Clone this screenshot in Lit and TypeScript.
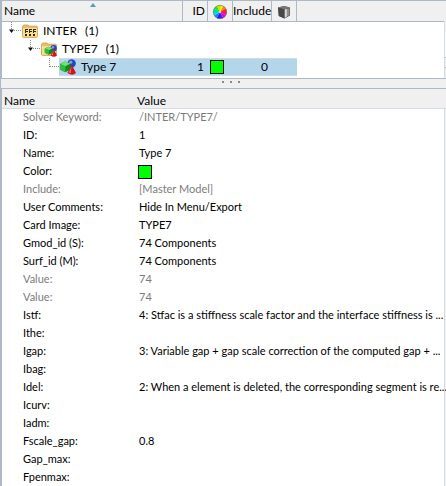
import { LitElement, html, svg, css, nothing } from "lit";
import { customElement } from "lit/decorators.js";
import { classMap } from "lit/directives/class-map.js";

interface TreeNode {
  label: string;
  count?: number;
  level: number;
  icon: "groups" | "folder" | "entity";
  id?: string;
  include?: string;
}

interface Attribute {
  name: string;
  value: string;
  muted?: boolean;
  swatch?: boolean;
}

const NODES: TreeNode[] = [
  { label: "INTER", count: 1, level: 0, icon: "groups" },
  { label: "TYPE7", count: 1, level: 1, icon: "folder" },
  { label: "Type 7", level: 2, icon: "entity", id: "1", include: "0" },
];

const ATTRIBUTES: Attribute[] = [
  { name: "Solver Keyword", value: "/INTER/TYPE7/", muted: true },
  { name: "ID", value: "1" },
  { name: "Name", value: "Type 7" },
  { name: "Color", value: "", swatch: true },
  { name: "Include", value: "[Master Model]", muted: true },
  { name: "User Comments", value: "Hide In Menu/Export" },
  { name: "Card Image", value: "TYPE7" },
  { name: "Gmod_id (S)", value: "74 Components" },
  { name: "Surf_id (M)", value: "74 Components" },
  { name: "Value", value: "74", muted: true },
  { name: "Value", value: "74", muted: true },
  { name: "Istf", value: "4: Stfac is a stiffness scale factor and the interface stiffness is ..." },
  { name: "Ithe", value: "" },
  { name: "Igap", value: "3: Variable gap + gap scale correction of the computed gap + ..." },
  { name: "Ibag", value: "" },
  { name: "Idel", value: "2: When a element is deleted, the corresponding segment is re..." },
  { name: "Icurv", value: "" },
  { name: "Iadm", value: "" },
  { name: "Fscale_gap", value: "0.8" },
  { name: "Gap_max", value: "" },
  { name: "Fpenmax", value: "" },
];

const WHEEL = [
  "#ffe500", "#ff8a00", "#ff2020", "#f0108a", "#d800e8", "#6a10f0",
  "#1020f0", "#1080ff", "#00d8f0", "#00e080", "#20e020", "#a8f000",
];

const folder = svg`
  <path d="M.5 3.5 L1.5 2 H6 L7 3.2 H14.5 Q15.4 3.2 15.4 4.2 V13.4 Q15.4 14.4 14.4 14.4 H1.6 Q.5 14.4 .5 13.4 Z" fill="#e9bd62" stroke="#cf9c45" stroke-width=".8"/>
  <path d="M1 5 H15 V13.8 H1 Z" fill="#f9dc95"/>`;

const shapes = svg`
  <circle cx="11.6" cy="4.4" r="4.2" fill="#2447b8"/>
  <circle cx="10.8" cy="3.2" r="1.6" fill="#7f9cf0"/>
  <path d="M11.6 5.6 L16 14 Q12.4 17.4 7.4 14 Z" fill="#cf1420"/>
  <path d="M11.5 7.5 L10.6 14.2 L9 13.4 Z" fill="#ff7b78"/>
  <path d="M0 5 L5 2.6 L10.4 4.6 V10.4 L5.4 13.2 L0 10.4 Z" fill="#158522"/>
  <path d="M0 5 L5 2.6 L10.4 4.6 L5.4 7.2 Z" fill="#6fe07a"/>
  <path d="M0 5 L5.4 7.2 V13.2 L0 10.4 Z" fill="#2cc03a"/>`;

function nodeIcon(kind: TreeNode["icon"]) {
  const body =
    kind === "groups"
      ? svg`${folder}<path d="M3 6h3v1H4v1h2v1H4v1H3zM7 6h3v1H8v1h2v1H8v1H7zM11 6h3v1h-2v1h2v1h-2v1h-1zM3 11h2v2h-2zM7 11h2v2H7zM11 11h2v2h-2z" fill="#33290f"/>`
      : kind === "folder"
        ? svg`${folder}<g transform="translate(3.8 3.8) scale(.76)">${shapes}</g>`
        : shapes;
  return html`<svg class="icon" viewBox="0 0 16 16" aria-hidden="true">${body}</svg>`;
}

function branch(leaf: boolean) {
  return html`<svg class="branch" viewBox="0 0 19 18" aria-hidden="true">
    <path d="${leaf ? "M9.5 0V9" : "M9.5 0V8"}M10 8.5H19" fill="none" stroke="#8a8a8a" stroke-dasharray="1 1"/>
    ${leaf ? nothing : svg`<path d="M7 7.5H12L9.5 11Z" fill="#111"/>`}
  </svg>`;
}

@customElement("app-root")
export class AppRoot extends LitElement {
  static styles = css`
    :host {
      display: flex;
      flex-direction: column;
      min-height: 100vh;
      box-sizing: border-box;
      overflow: hidden;
      background: #fff;
      color: #000;
      font: 12px/18px Lato, "Liberation Sans", sans-serif;
    }
    .browser {
      display: flex;
      border-top: 1px solid #adb9c5;
      border-left: 2px solid #adb9c5;
      border-bottom: 1px solid #adb9c5;
      background: linear-gradient(#f0f0f0 20px, #adb9c5 20px 21px, #fff 21px);
    }
    table {
      flex: 1;
      min-width: 0;
      width: 100%;
      table-layout: fixed;
      border-collapse: separate;
      border-spacing: 0;
    }
    th, td {
      padding: 0;
      font-weight: 400;
      text-align: left;
      white-space: nowrap;
      height: 18px;
    }
    .tree { margin-bottom: 2px; }
    .tree th {
      height: 20px;
      line-height: 20px;
      background: #f0f0f0;
      border-bottom: 1px solid #adb9c5;
      border-right: 1px solid #adb9c5;
    }
    .tree th:last-child { border-right: 0; }
    .head {
      display: grid;
      grid-template-columns: 1fr auto 1fr;
      height: 20px;
      padding-left: 2px;
    }
    .sort { width: 6px; height: 4px; margin-top: 2px; }
    .name { width: 181px; }
    .slot { width: 25px; }
    .include { width: 39px; }
    .tree th.number { text-align: right; padding-right: 2px; }
    .tree td.number { text-align: right; padding-right: 4px; }
    .tree th.middle { text-align: center; }
    .glyph { display: block; width: 16px; height: 16px; margin: 2px auto 0; }
    .node { display: flex; height: 18px; }
    .level-1 { padding-left: 19px; }
    .level-2 { padding-left: 38px; }
    .branch { flex: none; width: 19px; height: 18px; }
    .icon { flex: none; width: 16px; height: 16px; margin-top: 1px; }
    .label {
      flex: 1;
      display: flex;
      gap: 5px;
      padding-left: 1px;
    }
    .count { padding-left: 3px; }
    .selected .label, .selected .mark {
      background: #b3d6ea;
      box-shadow: inset 0 1px #cbdde8, inset 0 -1px #cbdde8;
    }
    .swatch {
      display: block;
      box-sizing: border-box;
      width: 14px;
      height: 14px;
      border: 1px solid #000;
      background: #0f0;
    }
    .mark .swatch { margin-left: 2px; }
    .scroll {
      flex: none;
      width: 1px;
      margin-top: 20px;
      border-left: 1px solid #d5dce3;
      background: linear-gradient(#f0f0f0 11px, #fff 11px 36px, #adb9c5 36px 37px, #f0f0f0 37px 46px, #adb9c5 46px 47px, #f0f0f0 47px);
    }
    .splitter {
      display: flex;
      justify-content: center;
      gap: 6px;
      height: 9px;
      padding-top: 2px;
      padding-left: 14px;
      box-sizing: border-box;
      border-left: 1px solid #adb9c5;
      background: #f0f0f0;
    }
    .dot { width: 2px; height: 2px; background: #8a8a8a; }
    .attributes {
      flex: 1;
      border-top: 1px solid #adb9c5;
      border-left: 2px solid #adb9c5;
      background: linear-gradient(to left, #f0f0f0 1px, #d5dce3 1px 2px, #fff 2px);
    }
    .attributes thead th {
      height: 20px;
      padding-top: 4px;
      line-height: 15px;
      box-sizing: border-box;
      border-bottom: 1px solid #d5dce3;
      background: #f0f0f0;
    }
    .attributes thead th:first-child { padding-left: 2px; }
    .attributes tbody { font-size: 11px; line-height: 16px; }
    .attributes tbody th, .attributes tbody td { vertical-align: top; }
    .attributes tbody th { padding-left: 21px; }
    .attributes tbody td { padding-left: 2px; }
    .attributes td .swatch { margin: 2px 0 0 -1px; }
    .key { width: 135px; }
    .muted { color: #7b7b7b; }
  `;

  private colorWheel() {
    return html`<svg class="glyph" viewBox="0 0 16 16" role="img" aria-label="Color">
      ${WHEEL.map((color, i) => {
        const at = (n: number) => {
          const a = (n * Math.PI) / 6 - Math.PI / 2;
          return `${8 + 6.8 * Math.cos(a)} ${8 + 6.8 * Math.sin(a)}`;
        };
        return svg`<path d="M8 8L${at(i)}A6.8 6.8 0 0 1 ${at(i + 1)}Z" fill=${color} />`;
      })}
      <circle cx="8" cy="8" r="6.7" fill="none" stroke="#777" stroke-width=".7"/>
      <circle cx="8" cy="8" r="1.2" fill="#fff" opacity=".5"/>
    </svg>`;
  }

  private cube() {
    return html`<svg class="glyph" viewBox="0 0 16 16" role="img" aria-label="Style">
      <path d="M2 3.6L8 2L14 3.6V11.5L8.6 14.6L2.8 12Z" fill="#555"/>
      <path d="M2 3.6L8 2L14 3.6L8.4 5.4Z" fill="#777"/>
      <path d="M2 3.6L8.4 5.4V14.6L2.8 12Z" fill="#484848"/>
      <path d="M8.8 5.6L13.4 4.2V11.2L8.8 13.8Z" fill="#909090"/>
      <path d="M8.8 5.6L10.8 5V12.6L8.8 13.8Z" fill="#d8d8d8"/>
    </svg>`;
  }

  render() {
    return html`
      <div class="browser">
        <table class="tree">
          <colgroup>
            <col class="name" /><col class="slot" /><col class="slot" /><col class="include" /><col class="slot" /><col />
          </colgroup>
          <thead>
            <tr>
              <th>
                <div class="head">
                  <span>Name</span>
                  <svg class="sort" viewBox="0 0 6 4" aria-hidden="true"><path d="M0 4L3 0L6 4Z" fill="#5b9ab5"/></svg>
                </div>
              </th>
              <th class="number">ID</th>
              <th>${this.colorWheel()}</th>
              <th class="middle">Include</th>
              <th>${this.cube()}</th>
              <th></th>
            </tr>
          </thead>
          <tbody>
            ${NODES.map((n) => {
              const leaf = n.id !== undefined;
              return html`<tr class=${classMap({ selected: leaf })}>
                <td>
                  <div class="node level-${n.level}">
                    ${branch(leaf)}
                    <span class="label">${nodeIcon(n.icon)}<span>${n.label}</span>${n.count ? html`<span class="count">(${n.count})</span>` : nothing}</span>
                  </div>
                </td>
                <td class="mark number">${n.id}</td>
                <td class="mark">${leaf ? html`<span class="swatch"></span>` : nothing}</td>
                <td class="mark number">${n.include}</td>
                <td class="mark"></td>
                <td></td>
              </tr>`;
            })}
          </tbody>
        </table>
        <div class="scroll"></div>
      </div>
      <div class="splitter" role="separator">
        <span class="dot"></span><span class="dot"></span><span class="dot"></span>
      </div>
      <div class="attributes">
        <table>
          <colgroup><col class="key" /><col /></colgroup>
          <thead><tr><th>Name</th><th>Value</th></tr></thead>
          <tbody>
            ${ATTRIBUTES.map(
              (a) => html`<tr class=${classMap({ muted: !!a.muted })}>
                <th scope="row">${a.name}:</th>
                <td>${a.swatch ? html`<span class="swatch"></span>` : a.value}</td>
              </tr>`,
            )}
          </tbody>
        </table>
      </div>
    `;
  }
}
